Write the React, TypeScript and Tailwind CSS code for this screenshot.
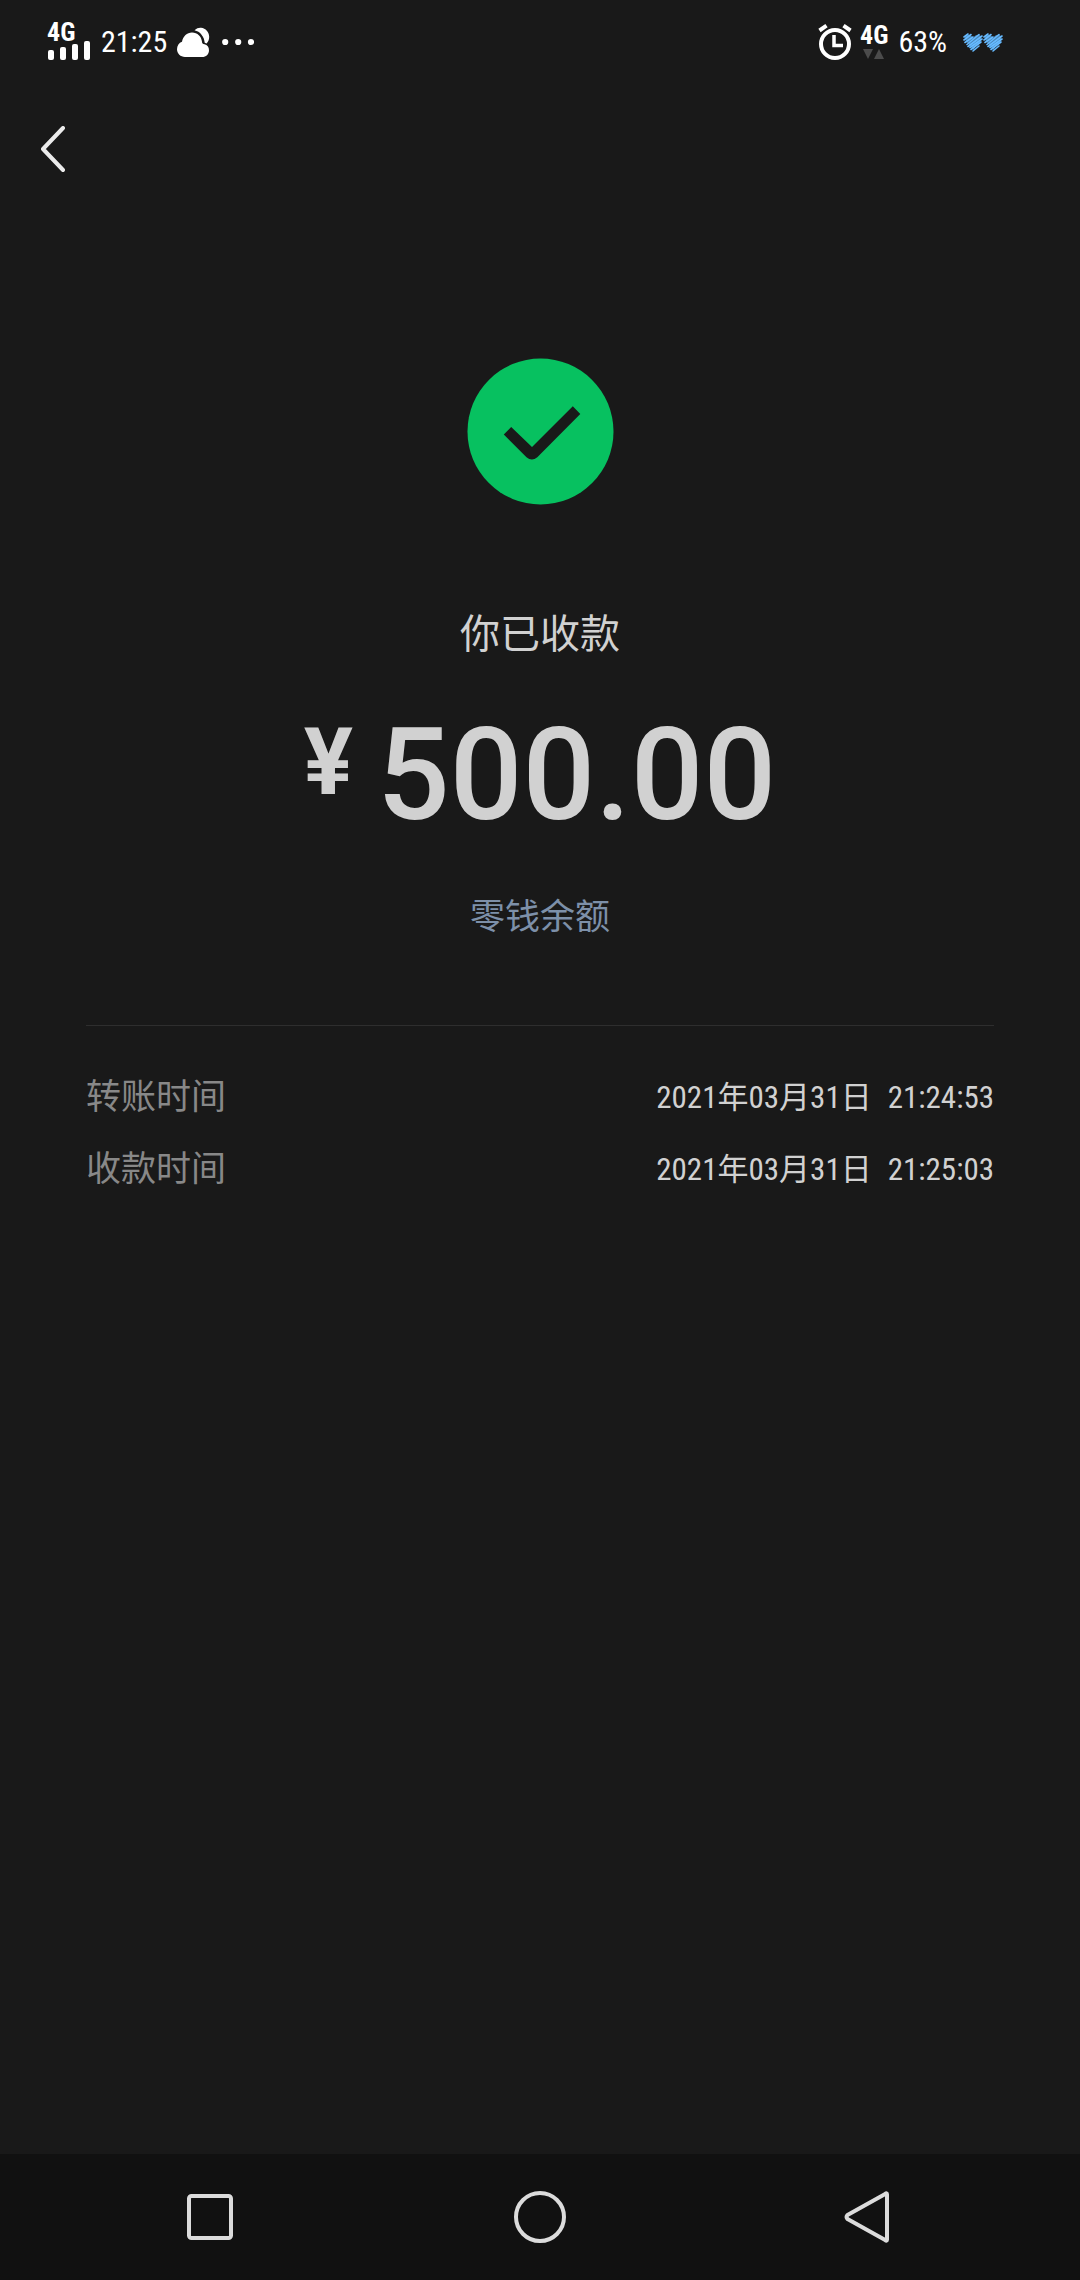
import React from "react";

const HAND = "font-['Roboto_Condensed','Noto_Sans_CJK_SC',sans-serif]";
const NETWORK = "font-['Roboto_Condensed',sans-serif] text-[26px] font-bold";

function SignalBars() {
  return (
    <svg width="44" height="20" viewBox="0 0 44 20" fill="#fff" aria-hidden="true">
      <rect x="1" y="10" width="6" height="10" rx="2" />
      <rect x="13" y="7" width="6" height="13" rx="2" />
      <rect x="25" y="4" width="6" height="16" rx="2" />
      <rect x="37" y="1" width="6" height="19" rx="2" />
    </svg>
  );
}

function CloudIcon() {
  return (
    <svg width="33" height="31" viewBox="0 0 33 31" fill="#fff" aria-hidden="true">
      <path d="M8 30C3.500 30 0 26.600 0 22.300c0-3.700 2-6.500 5-7.500C6 9.200 10 5.500 15 5.500c5.500 0 9.500 4 10 9.300 0 1.700.8 2.200 2.500 2.500 2.800.5 4.500 2.900 4.500 5.900 0 4-3 6.800-6.800 6.800z" />
      <path d="M17.500 3.200C19.600 1.200 21.800.5 24 .7c4.700.4 8.200 4.300 8.200 9 0 2.700-.9 5-2.600 6.800l-1.900-.7c-.5-6.400-4.500-11.300-10.200-12.600z" />
    </svg>
  );
}

function MoreDots() {
  return (
    <svg width="32" height="8" viewBox="0 0 32 8" fill="#fff" aria-hidden="true">
      <circle cx="3.200" cy="4" r="3.100" />
      <circle cx="16.200" cy="4" r="3.100" />
      <circle cx="29" cy="4" r="3.100" />
    </svg>
  );
}

function AlarmIcon() {
  return (
    <svg width="34" height="37" viewBox="0 0 34 37" fill="none" stroke="#fff" aria-hidden="true">
      <circle cx="17" cy="20" r="14" strokeWidth="4" />
      <path d="M16 11v10.500h9" strokeWidth="3.500" />
      <path d="M1.500 6.500 8.500 1.700M32.500 6.500l-7-4.800" strokeWidth="4" />
    </svg>
  );
}

function DataArrows() {
  return (
    <svg width="22" height="10" viewBox="0 0 22 10" fill="#4b4b4b" aria-hidden="true">
      <path d="M0 0h10L5 10z" />
      <path d="M11 10h10L16 0z" />
    </svg>
  );
}

function HeartsBattery() {
  return (
    <svg width="40" height="19" viewBox="0 0 40 19" fill="none" role="img" aria-label="电池">
      <defs>
        <g id="scribble">
          <path
            d="M10.500 17C8 13 2.500 9.500 2 5.500 1.800 3 3.500 1.800 5.500 2c2.300.3 3.800 1.700 4.800 3 1.200-2 3-3.200 5.200-3.200 2.200.2 3 2 2.600 4-.8 4-5.100 7.200-7.600 11.200z"
            fill="#5db0f5"
            fillOpacity="0.7"
          />
          <path
            stroke="#66baff"
            strokeWidth="1.600"
            strokeLinecap="round"
            strokeLinejoin="round"
            d="M1 4 5 1M1 7 8 1.500M2 9.500 10 4M4 11.500 16 1.500M5 13.500 19 3M7 14.500 19 6M8 16.500 18 9M10 18l6-5"
          />
        </g>
      </defs>
      <use href="#scribble" />
      <use href="#scribble" x="20" />
    </svg>
  );
}

function StatusBar() {
  return (
    <header className="flex h-[84px] items-center justify-between pl-[47px] pr-[77px] text-white">
      <div className="flex items-center">
        <div className="flex flex-col">
          <span className={`leading-4 ${NETWORK}`}>4G</span>
          <SignalBars />
        </div>
        <time className={`mx-[10px] text-[30px] leading-10 ${HAND}`}>21:25</time>
        <div className="flex items-center gap-3">
          <CloudIcon />
          <MoreDots />
        </div>
      </div>
      <div className="flex items-center">
        <AlarmIcon />
        <div className="ml-2 flex flex-col items-center gap-1">
          <span className={`leading-5 ${NETWORK}`}>4G</span>
          <DataArrows />
        </div>
        <span className={`ml-[10px] mr-4 text-[30px] leading-10 ${HAND}`}>63%</span>
        <HeartsBattery />
      </div>
    </header>
  );
}

const records = [
  { label: "转账时间", date: "2021年03月31日", time: "21:24:53" },
  { label: "收款时间", date: "2021年03月31日", time: "21:25:03" },
];

export default function App() {
  return (
    <div className="flex min-h-screen flex-col bg-[#191919] text-[#d1d1d1]">
      <StatusBar />
      <div className="flex h-[132px] pl-7">
        <button type="button" aria-label="返回" className="flex w-[60px] items-center pl-3">
          <svg width="28" height="48" viewBox="0 0 28 48" fill="none" aria-hidden="true">
            <path d="M23 2 3 23l20 21" stroke="#ebebeb" strokeWidth="4" strokeLinecap="round" strokeLinejoin="round" />
          </svg>
        </button>
      </div>

      <main className="flex flex-1 flex-col px-[86px] pt-[142px]">
        <section className="flex flex-col items-center">
          <svg width="147" height="147" viewBox="0 0 147 147" fill="none" role="img" aria-label="成功">
            <circle cx="73.500" cy="73.500" r="73" fill="#07c160" />
            <path d="m44.200 69-7.400 7.500L59.500 99.200q5.400 4.600 10.800 0l43-43.200-7.500-7.800L65 88.900z" fill="#191919" />
          </svg>
          <h1 className={`mt-[100px] text-[40px] font-normal leading-[60px] ${HAND}`}>你已收款</h1>
          <p className="mt-[34px] flex items-start font-[Roboto,sans-serif]">
            <span className="mr-6 text-[92px] font-bold leading-[128px]">¥</span>
            <span className="text-[128px] font-medium leading-[152px]">500.00</span>
          </p>
          <a href="#balance" className={`mt-10 text-[35px] leading-[54px] text-[#7d90a9] ${HAND}`}>
            零钱余额
          </a>
        </section>

        <dl className={`mt-20 border-t-1 border-[#2e2e2e] pt-9 text-[35px] leading-[72px] ${HAND}`}>
          {records.map((r) => (
            <div key={r.label} className="flex items-center justify-between">
              <dt className="text-[#888888]">{r.label}</dt>
              <dd className="flex gap-4 text-[31px]">
                <span>{r.date}</span>
                <span>{r.time}</span>
              </dd>
            </div>
          ))}
        </dl>
      </main>

      <nav className="grid h-[126px] grid-cols-3 bg-[#111111] px-[45px]">
        <button type="button" aria-label="最近任务" className="flex items-center justify-center">
          <svg width="48" height="48" viewBox="0 0 48 48" fill="none" aria-hidden="true">
            <rect x="3" y="3" width="42" height="42" rx="2.500" stroke="#dcdcdc" strokeWidth="4" />
          </svg>
        </button>
        <button type="button" aria-label="主屏幕" className="flex items-center justify-center">
          <svg width="54" height="54" viewBox="0 0 54 54" fill="none" aria-hidden="true">
            <circle cx="27" cy="27" r="24" stroke="#dcdcdc" strokeWidth="4" />
          </svg>
        </button>
        <button type="button" aria-label="返回" className="flex items-center justify-center">
          <svg width="54" height="54" viewBox="0 0 54 54" fill="none" aria-hidden="true">
            <path
              d="M44 4.500v45q0 2-1.800.6L4.500 29q-2-2 0-4L42.200 3.900Q44 2.500 44 4.500z"
              stroke="#dcdcdc"
              strokeWidth="4"
              strokeLinejoin="round"
            />
          </svg>
        </button>
      </nav>
    </div>
  );
}
